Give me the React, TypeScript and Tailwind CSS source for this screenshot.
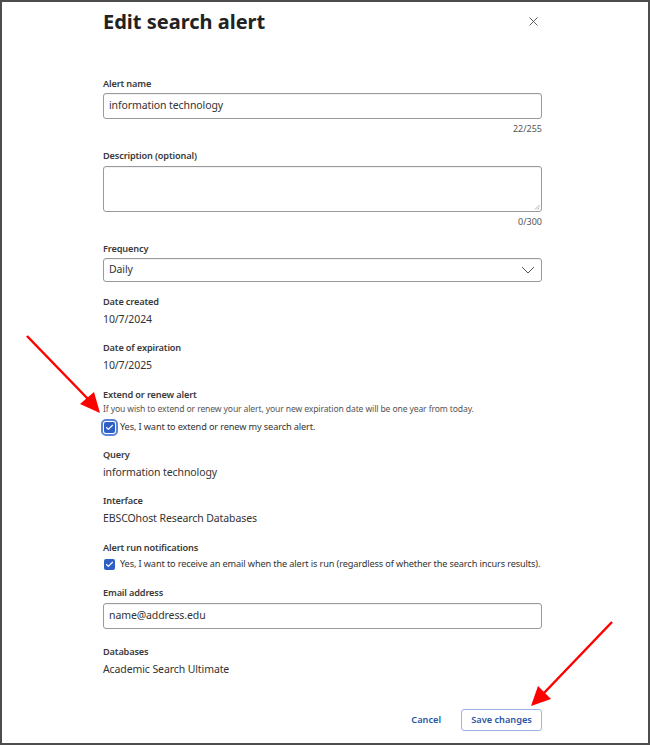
import { X, Check } from "lucide-react";

const font = { fontFamily: '"Noto Sans", "Open Sans", sans-serif' };

function Label({ children }: { children: React.ReactNode }) {
  return (
    <div className="text-[9.2px] font-semibold leading-[13px] tracking-[-0.15px] text-[#3a3a3a]">{children}</div>
  );
}

function Value({ children }: { children: React.ReactNode }) {
  return <div className="mt-[3px] text-[10.5px] leading-[16px] tracking-[-0.1px] text-[#333]">{children}</div>;
}

function Box({ children, className = "" }: { children?: React.ReactNode; className?: string }) {
  return (
    <div
      className={`flex items-center rounded-[3px] border border-[#9a9a9a] bg-white px-[5px] text-[10.5px] tracking-[-0.1px] text-[#333] shadow-[inset_0_1px_1px_rgba(0,0,0,0.06)] ${className}`}
    >
      {children}
    </div>
  );
}

function CheckBox({ focused = false }: { focused?: boolean }) {
  return (
    <span
      className={`flex h-[11px] w-[11px] shrink-0 items-center justify-center rounded-[2px] bg-[#2d5fc4] ${
        focused ? "outline outline-2 outline-offset-[1px] outline-[#5b84d6]" : ""
      }`}
    >
      <Check size={9} strokeWidth={3} color="white" />
    </span>
  );
}

export default function App() {
  return (
    <div className="relative h-[745px] w-[650px] overflow-hidden bg-white" style={font}>
      <div className="pointer-events-none absolute inset-0 border-[2px] border-[#4d4d4d]" />

      <div className="ml-[103px] w-[439px] pt-[9px]">
        <div className="flex items-center justify-between">
          <h1 className="text-[20px] font-bold leading-[26px] text-[#222]">Edit search alert</h1>
          <X size={15} strokeWidth={1.5} className="mr-[1px] -mt-[1px] text-[#555]" />
        </div>

        <div className="mt-[42px]">
          <Label>Alert name</Label>
          <Box className="mt-[3px] h-[26px]">information technology</Box>
          <div className="mt-[4px] text-right text-[9px] leading-[12px] text-[#555]">22/255</div>
        </div>

        <div className="mt-[14px]">
          <Label>Description (optional)</Label>
          <Box className="relative mt-[4px] h-[46px]">
            <svg className="absolute bottom-[1px] right-[1px]" width="6" height="6" viewBox="0 0 6 6">
              <path d="M5.5 1 L1 5.5 M5.5 3.5 L3.5 5.5" stroke="#999" strokeWidth="0.8" />
            </svg>
          </Box>
          <div className="mt-[4px] text-right text-[9px] leading-[12px] text-[#555]">0/300</div>
        </div>

        <div className="mt-[14px]">
          <Label>Frequency</Label>
          <Box className="mt-[3px] h-[24px] justify-between pr-[6px]">
            <span>Daily</span>
            <svg width="14" height="8" viewBox="0 0 14 8">
              <path d="M1 1 L7 7 L13 1" fill="none" stroke="#555" strokeWidth="1" />
            </svg>
          </Box>
        </div>

        <div className="mt-[13px]">
          <Label>Date created</Label>
          <Value>10/7/2024</Value>
        </div>

        <div className="mt-[14px]">
          <Label>Date of expiration</Label>
          <Value>10/7/2025</Value>
        </div>

        <div className="mt-[15px]">
          <Label>Extend or renew alert</Label>
          <div className="mt-[2px] text-[8.6px] leading-[13px] tracking-[-0.13px] text-[#555]">
            If you wish to extend or renew your alert, your new expiration date will be one year from today.
          </div>
          <div className="mt-[4px] flex items-center gap-[5px] pl-[1px] text-[9.2px] leading-[14px] tracking-[-0.13px] text-[#333]">
            <CheckBox focused />
            <span>Yes, I want to extend or renew my search alert.</span>
          </div>
        </div>

        <div className="mt-[14px]">
          <Label>Query</Label>
          <Value>information technology</Value>
        </div>

        <div className="mt-[14px]">
          <Label>Interface</Label>
          <Value>EBSCOhost Research Databases</Value>
        </div>

        <div className="mt-[15px]">
          <Label>Alert run notifications</Label>
          <div className="mt-[3px] flex items-center gap-[5px] pl-[1px] text-[9.2px] leading-[14px] tracking-[-0.13px] text-[#333]">
            <CheckBox />
            <span>Yes, I want to receive an email when the alert is run (regardless of whether the search incurs results).</span>
          </div>
        </div>

        <div className="mt-[15px]">
          <Label>Email address</Label>
          <Box className="mt-[4px] h-[26px]">name@address.edu</Box>
        </div>

        <div className="mt-[16px]">
          <Label>Databases</Label>
          <Value>Academic Search Ultimate</Value>
        </div>

        <div className="mt-[32px] flex items-center justify-end gap-[20px]">
          <button className="text-[9.2px] font-semibold text-[#2a55a8]">Cancel</button>
          <button className="h-[22px] w-[81px] rounded-[3px] border border-[#9db5e2] text-[9.2px] font-semibold text-[#2a55a8]">
            Save changes
          </button>
        </div>
      </div>

      <svg className="pointer-events-none absolute left-0 top-0" width="650" height="745">
        <line x1="27" y1="336" x2="88" y2="399" stroke="#f00" strokeWidth="2.5" />
        <polygon points="100,413 80,404 94,392" fill="#f00" />
        <line x1="612" y1="622" x2="544" y2="693" stroke="#f00" strokeWidth="2.5" />
        <polygon points="531,706 538,686 551,699" fill="#f00" />
      </svg>
    </div>
  );
}
